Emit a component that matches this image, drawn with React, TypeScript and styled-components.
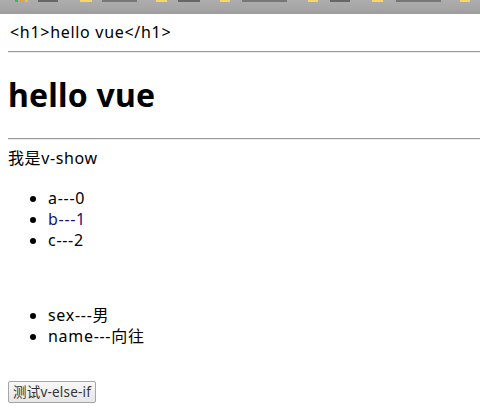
import React from "react";
import styled, { createGlobalStyle } from "styled-components";

const Global = createGlobalStyle`
  html, body { margin: 0; padding: 0; background: #fff; }
  body {
    font-family: "Noto Sans", "Noto Sans CJK SC", sans-serif;
    font-size: 16px;
    line-height: 21px;
    color: #000;
  }
`;

const BookmarkBar = styled.div`
  height: 14px;
  background: linear-gradient(#adadad, #a6a6a6 60%, #9c9c9c);
  position: relative;
  overflow: hidden;
`;

const Folder = styled.span<{ $x: number; $w: number; $c: string }>`
  position: absolute;
  top: 0;
  left: ${(p) => p.$x}px;
  width: ${(p) => p.$w}px;
  height: 2px;
  background: ${(p) => p.$c};
`;

const Page = styled.div`
  padding: 8px 0 8px 8px;
`;

const Raw = styled.div`
  padding-left: 2px;
  letter-spacing: 0.7px;
`;

const Rule = styled.hr<{ $mt?: number }>`
  margin: ${(p) => (p.$mt ?? 8)}px 0 0 0;
  border: none;
  border-top: 1px solid #9a9a9a;
  border-bottom: 1px solid #ececec;
  height: 0;
`;

const Title = styled.h1`
  font-size: 32px;
  font-weight: bold;
  line-height: 42px;
  margin: 21px 0 22px 0;
  letter-spacing: 0.2px;
`;

const Para = styled.div`
  margin-top: 8px;
  letter-spacing: 0.6px;
`;

const List = styled.ul<{ $mt: number }>`
  margin: ${(p) => p.$mt}px 0 0 0;
  padding-left: 40px;
  list-style: disc;
`;

const Item = styled.li<{ $c?: string }>`
  color: ${(p) => p.$c || "#000"};
  line-height: 21px;
  letter-spacing: 0.7px;
  &::marker { color: #000; }
`;

const Button = styled.button`
  margin-top: 34px;
  font-family: "Noto Sans", "Noto Sans CJK SC", sans-serif;
  font-size: 13.5px;
  color: #333;
  background: linear-gradient(#f8f8f8, #e6e6e6);
  border: 1px solid #a6a6a6;
  border-radius: 2px;
  height: 22px;
  padding: 0 4px;
  line-height: 20px;
  white-space: nowrap;
  letter-spacing: 0.2px;
`;

const bits = [
  { x: 15, w: 3, c: "#3bb56b" },
  { x: 20, w: 4, c: "#f0a030" },
  { x: 25, w: 3, c: "#f0c040" },
  { x: 38, w: 20, c: "#666" },
  { x: 80, w: 12, c: "#f6d56a" },
  { x: 102, w: 35, c: "#777" },
  { x: 156, w: 11, c: "#f6d56a" },
  { x: 178, w: 22, c: "#666" },
  { x: 220, w: 10, c: "#f6d56a" },
  { x: 242, w: 45, c: "#777" },
  { x: 308, w: 10, c: "#f6d56a" },
  { x: 330, w: 20, c: "#666" },
  { x: 372, w: 11, c: "#f6d56a" },
  { x: 396, w: 45, c: "#777" },
  { x: 460, w: 10, c: "#f6d56a" },
];

export default function App() {
  return (
    <>
      <Global />
      <BookmarkBar>
        {bits.map((b, i) => (
          <Folder key={i} $x={b.x} $w={b.w} $c={b.c} />
        ))}
      </BookmarkBar>
      <Page>
        <Raw>{"<h1>hello vue</h1>"}</Raw>
        <Rule />
        <Title>hello vue</Title>
        <Rule $mt={0} />
        <Para>我是v-show</Para>
        <List $mt={19}>
          <Item>a---0</Item>
          <Item $c="#14146e">b---1</Item>
          <Item>c---2</Item>
        </List>
        <List $mt={54}>
          <Item>sex---男</Item>
          <Item>name---向往</Item>
        </List>
        <Button>测试v-else-if</Button>
      </Page>
    </>
  );
}
